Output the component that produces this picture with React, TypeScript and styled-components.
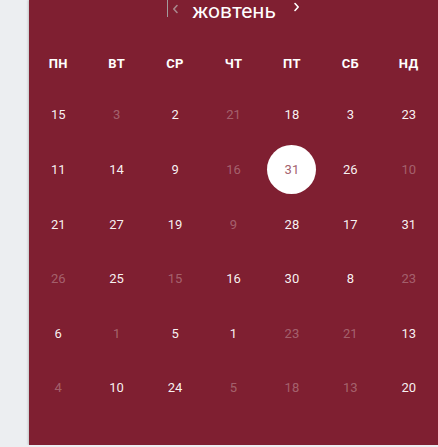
import React from "react";
import styled, { createGlobalStyle } from "styled-components";

const GlobalStyle = createGlobalStyle`
  html, body {
    margin: 0;
    padding: 0;
    background: #eceef1;
  }
  body {
    font-family: Roboto, "Noto Sans", "Liberation Sans", sans-serif;
  }
`;

const Page = styled.div`
  display: flex;
  padding-left: 29px;
`;

const Calendar = styled.div`
  width: 409px;
  height: 445px;
  background: #7f1f31;
  box-shadow: -1px 0 2px rgba(0, 0, 0, 0.18);
  display: flex;
  flex-direction: column;
`;

const Header = styled.div`
  height: 22px;
  display: flex;
  align-items: center;
  justify-content: center;
`;

const NavButton = styled.span<{ $side: "prev" | "next" }>`
  display: flex;
  align-items: center;
  align-self: flex-start;
  height: 17px;
  color: ${(p) => (p.$side === "prev" ? "#a9878d" : "#ffffff")};
  border-left: ${(p) => (p.$side === "prev" ? "1px solid #a39a9c" : "none")};
  padding-left: ${(p) => (p.$side === "prev" ? "4px" : "0")};
  margin-right: ${(p) => (p.$side === "prev" ? "13px" : "0")};
  margin-left: ${(p) => (p.$side === "next" ? "17px" : "0")};
  margin-top: ${(p) => (p.$side === "next" ? "-2px" : "0")};
`;

const Title = styled.div`
  font-size: 21px;
  line-height: 22px;
  color: #ffffff;
  margin-top: -1px;
`;

const Grid = styled.div`
  display: grid;
  grid-template-columns: repeat(7, 1fr);
`;

const WeekRow = styled(Grid)`
  margin-top: 29px;
  height: 24px;
  align-items: center;
`;

const WeekDay = styled.div`
  text-align: center;
  font-size: 13px;
  font-weight: 700;
  color: #ffffff;
  letter-spacing: 0.4px;
`;

const DaysGrid = styled(Grid)`
  margin-top: 12.7px;
  grid-auto-rows: 54.6px;
`;

const DayCell = styled.div`
  display: flex;
  align-items: center;
  justify-content: center;
`;

const DayNum = styled.span<{ $muted?: boolean; $selected?: boolean }>`
  display: flex;
  align-items: center;
  justify-content: center;
  width: 49px;
  height: 49px;
  border-radius: 50%;
  font-size: 13px;
  background: ${(p) => (p.$selected ? "#ffffff" : "transparent")};
  color: ${(p) =>
    p.$selected
      ? "#a4626e"
      : p.$muted
      ? "rgba(255,255,255,0.3)"
      : "rgba(255,255,255,0.95)"};
`;

const Chevron = ({ dir }: { dir: "left" | "right" }) => (
  <svg width="7" height="10" viewBox="0 0 7 10" fill="none">
    <path
      d={dir === "left" ? "M5 1.5 L1.8 5 L5 8.5" : "M2 1.5 L5.2 5 L2 8.5"}
      stroke="currentColor"
      strokeWidth="1.6"
      strokeLinecap="round"
      strokeLinejoin="round"
    />
  </svg>
);

const weekDays = ["ПН", "ВТ", "СР", "ЧТ", "ПТ", "СБ", "НД"];

type Day = { n: number; m?: boolean; s?: boolean };

const rows: Day[][] = [
  [{ n: 15 }, { n: 3, m: true }, { n: 2 }, { n: 21, m: true }, { n: 18 }, { n: 3 }, { n: 23 }],
  [{ n: 11 }, { n: 14 }, { n: 9 }, { n: 16, m: true }, { n: 31, s: true }, { n: 26 }, { n: 10, m: true }],
  [{ n: 21 }, { n: 27 }, { n: 19 }, { n: 9, m: true }, { n: 28 }, { n: 17 }, { n: 31 }],
  [{ n: 26, m: true }, { n: 25 }, { n: 15, m: true }, { n: 16 }, { n: 30 }, { n: 8 }, { n: 23, m: true }],
  [{ n: 6 }, { n: 1, m: true }, { n: 5 }, { n: 1 }, { n: 23, m: true }, { n: 21, m: true }, { n: 13 }],
  [{ n: 4, m: true }, { n: 10 }, { n: 24 }, { n: 5, m: true }, { n: 18, m: true }, { n: 13, m: true }, { n: 20 }],
];

export default function App() {
  return (
    <>
      <GlobalStyle />
      <Page>
        <Calendar>
          <Header>
            <NavButton $side="prev">
              <Chevron dir="left" />
            </NavButton>
            <Title>жовтень</Title>
            <NavButton $side="next">
              <Chevron dir="right" />
            </NavButton>
          </Header>
          <WeekRow>
            {weekDays.map((d) => (
              <WeekDay key={d}>{d}</WeekDay>
            ))}
          </WeekRow>
          <DaysGrid>
            {rows.flat().map((d, i) => (
              <DayCell key={i}>
                <DayNum $muted={d.m} $selected={d.s}>
                  {d.n}
                </DayNum>
              </DayCell>
            ))}
          </DaysGrid>
        </Calendar>
      </Page>
    </>
  );
}
